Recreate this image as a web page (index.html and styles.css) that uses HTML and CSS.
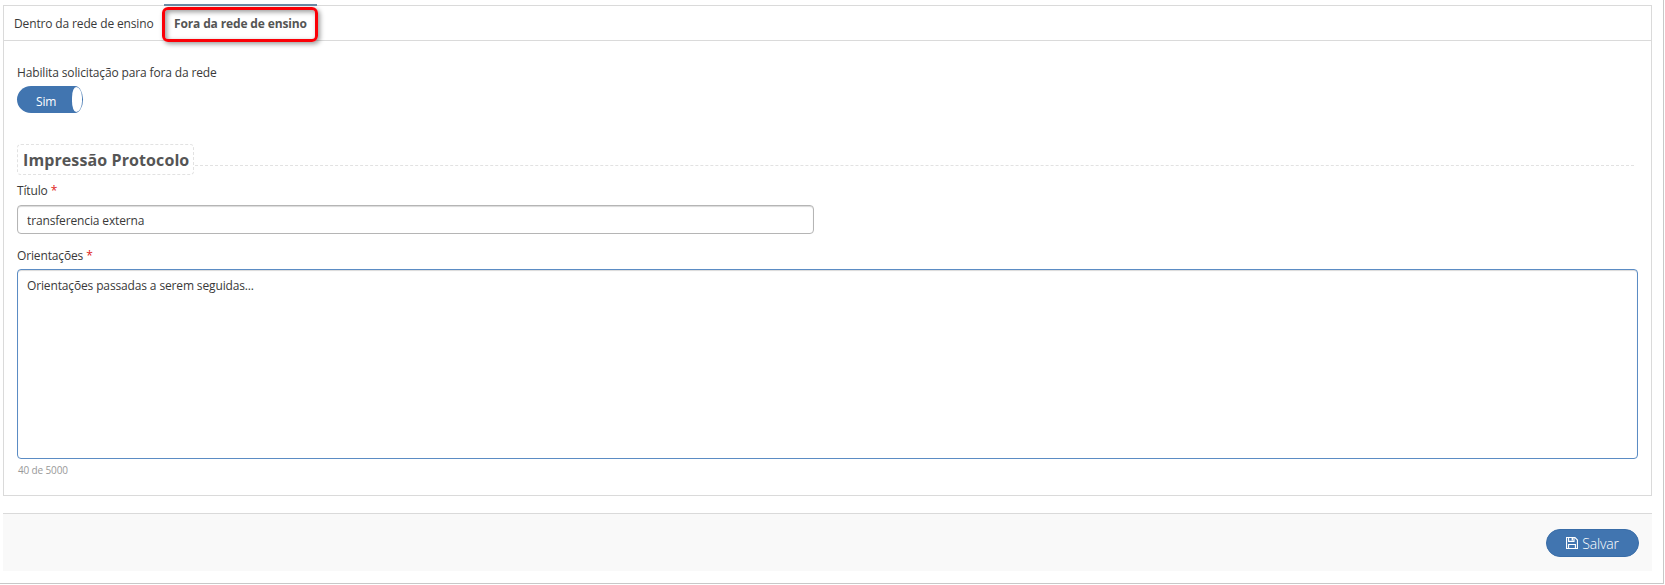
FILE: index.html
```html
<!DOCTYPE html>
<html lang="pt-BR">
<head>
<meta charset="UTF-8" />
<meta name="viewport" content="width=device-width, initial-scale=1" />
<title>Solicitação de transferência</title>
<link rel="stylesheet" href="styles.css">
</head>
<body>
  <div class="page">
    <div class="panel">
      <ul class="tabs">
        <li class="tab"><a>Dentro da rede de ensino</a></li>
        <li class="tab active"><a>Fora da rede de ensino</a><span class="highlight"></span></li>
      </ul>

      <form class="panel-body">
        <label class="switch-label">Habilita solicitação para fora da rede</label>
        <div class="switch"><span class="switch-text">Sim</span><span class="switch-knob"></span></div>

        <div class="section">
          <h2>Impressão Protocolo</h2>
          <span class="section-line"></span>
        </div>

        <label for="titulo">Título <span class="required">*</span></label>
        <input type="text" id="titulo" value="transferencia externa" />

        <label for="orientacoes" class="label-text">Orientações <span class="required">*</span></label>
        <textarea id="orientacoes" spellcheck="false">Orientações passadas a serem seguidas...</textarea>
        <div class="counter">40 de 5000</div>
      </form>
    </div>

    <div class="footer">
      <button type="button" class="btn-save">
        <svg width="12" height="12" viewBox="0 0 12 12" fill="none" stroke="#fff" stroke-width="1.1">
          <path d="M.55 .55H9L11.45 3V11.45H.55Z" />
          <path d="M2.6 .6V4.4H8V.6M2.6 11.4V7.5H9.4V11.4" />
          <path d="M6.3 1V3.4" stroke-width="1.4" />
        </svg>
        <span>Salvar</span>
      </button>
    </div>
  </div>
</body>
</html>
```

FILE: styles.css
```css
* {
  box-sizing: border-box;
}
body {
  font-family: "Open Sans", Arial, sans-serif;
  font-size: 12px;
  line-height: 18px;
  letter-spacing: -0.14px;
  background: #fff;
  color: #393939;
  margin: 0;
}
.page {
  width: 1664px;
  height: 584px;
  padding: 5px 11px 0 3px;
  border-right: 1px solid #c8c8c8;
  border-bottom: 1px solid #c8c8c8;
}
.panel {
  height: 491px;
  border: 1px solid #dadada;
}
.tabs {
  display: flex;
  height: 35px;
  margin: 0;
  padding: 0;
  list-style: none;
  border-bottom: 1px solid #dadada;
}
.tab {
  padding: 9px 0 0 10px;
  width: 160px;
  white-space: nowrap;
}
.tab.active {
  position: relative;
  width: 153px;
  margin-top: -2px;
  border-top: 2px solid #6c8ca6;
  color: #555;
  font-weight: 700;
}
/* red marker drawn over the active tab */
.highlight {
  position: absolute;
  top: 1px;
  left: -2px;
  width: 156px;
  height: 35px;
  border: 3px solid #fb0007;
  border-radius: 6px;
  box-shadow: 2px 2px 5px rgba(0, 0, 0, 0.4), inset 2px 2px 5px rgba(0, 0, 0, 0.4);
}
.panel-body {
  padding: 23px 13px 0;
}
label {
  display: block;
}
.switch {
  display: flex;
  justify-content: space-between;
  width: 66px;
  height: 27px;
  margin-top: 4px;
  padding: 1px 1px 1px 19px;
  border-radius: 14px 8px 8px 14px / 13.5px;
  background: #4175b0;
  color: #fff;
  line-height: 29px;
}
.switch-knob {
  width: 10px;
  height: 25px;
  border-radius: 5px 7px 7px 5px / 12.5px;
  background: #fff;
}
.section {
  display: flex;
  height: 31px;
  margin: 31px 4px 7px 0;
}
.section h2 {
  width: 177px;
  margin: 0;
  padding: 0 0 0 5px;
  border: 1px dashed #e2e2e2;
  border-radius: 4px;
  font-size: 16px;
  line-height: 30px;
  letter-spacing: 0.1px;
  color: #555;
  white-space: nowrap;
}
.section-line {
  flex: 1;
  height: 22px;
  margin-left: 1px;
  border-bottom: 1px dashed #e2e2e2;
}
.required {
  color: #e02222;
}
input,
textarea {
  display: block;
  font: inherit;
  letter-spacing: inherit;
  color: #393939;
  background: #fff;
  outline: none;
  border-radius: 4px;
}
input {
  width: 797px;
  height: 29px;
  margin-top: 5px;
  padding: 1px 9px 0;
  border: 1px solid #b5b5b5;
  box-shadow: inset 0 1px 1px rgba(0, 0, 0, 0.15);
}
.label-text {
  margin-top: 13px;
}
textarea {
  width: 1621px;
  height: 190px;
  margin-top: 4px;
  padding: 7px 9px;
  border: 1px solid #5b8cc4;
  box-shadow: inset 0 1px 1px rgba(0, 0, 0, 0.15);
  resize: none;
}
.counter {
  margin-top: 2px;
  padding-left: 1px;
  font-size: 10px;
  color: #999;
}
.footer {
  display: flex;
  justify-content: flex-end;
  height: 58px;
  margin-top: 17px;
  padding: 15px 13px 0 0;
  border-top: 1px solid #dadada;
  background: #f9f9f9;
}
.btn-save {
  display: flex;
  align-items: center;
  justify-content: center;
  gap: 4px;
  width: 93px;
  height: 28px;
  padding: 0;
  border: 1px solid #396da8;
  border-radius: 14px;
  background: #4175b0;
  color: #fff;
  font-family: inherit;
  font-size: 14px;
  letter-spacing: -0.2px;
}
.btn-save span {
  font-weight: 300;
}
```
